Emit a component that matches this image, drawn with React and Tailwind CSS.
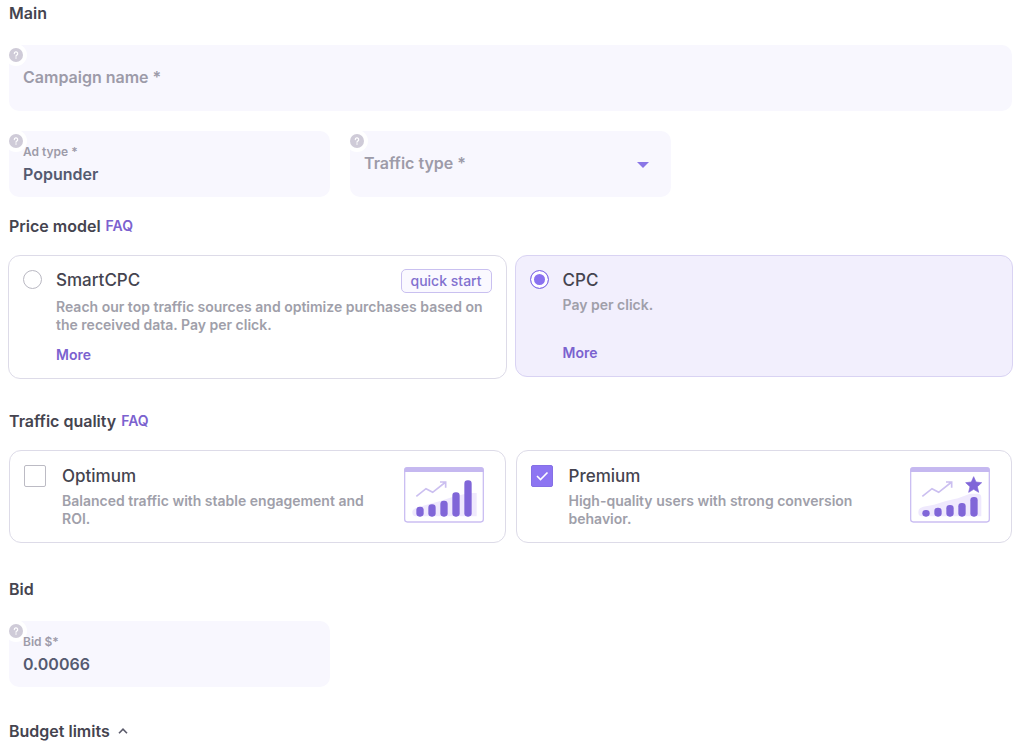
import React, { useState } from 'react';

const HelpIcon = () => (
  <button
    type="button"
    aria-label="Help"
    className="absolute -left-1 -top-px z-10 flex size-[22px] items-center justify-center rounded-full bg-white"
  >
    <svg viewBox="0 0 14 14" className="size-[14px]" fill="none">
      <circle cx="7" cy="7" r="7" fill="#cfcbd8" />
      <path d="M5.3 5.6a1.7 1.7 0 1 1 2.5 1.5c-.5.3-.8.5-.8 1.1" stroke="#fff" strokeWidth="1.2" strokeLinecap="round" />
      <circle cx="7" cy="10.1" r=".75" fill="#fff" />
    </svg>
  </button>
);

const SectionTitle = ({ children, faq }) => (
  <h2 className="flex items-center gap-[5px] text-[16px] leading-6 font-semibold text-[#45444f]">
    {children}
    {faq && <a href="#faq" className="text-[14px] text-[#7b62cf]">FAQ</a>}
  </h2>
);

const FilledField = ({ id, label, ...props }) => (
  <div className="relative flex h-[66px] flex-col rounded-[10px] bg-[#f8f7fe] px-[14px] pt-3">
    <HelpIcon />
    <label htmlFor={id} className="relative z-10 text-[12px] leading-[18px] font-semibold text-[#9d9ba9]">{label}</label>
    <input id={id} className="h-[26px] w-full bg-transparent text-[16px] font-semibold text-[#555a70] outline-none" {...props} />
  </div>
);

const PriceCard = ({ id, title, text, badge, checked, onChange }) => (
  <div className={`flex gap-[14px] rounded-xl border p-[14px] pt-[13px] ${checked ? 'border-[#d9d3f3] bg-[#f2effd]' : 'border-[#dddbe8] bg-white'}`}>
    <input
      id={id}
      type="radio"
      name="price"
      checked={checked}
      onChange={onChange}
      className="mt-px size-[19px] shrink-0 appearance-none rounded-full border border-[#b9b8c2] bg-white checked:border-[#8570e6] checked:bg-[#8a72f0] checked:shadow-[inset_0_0_0_3px_white]"
    />
    <div className="flex-1">
      <div className="flex items-start justify-between">
        <label htmlFor={id} className="text-[17px] leading-[22px] font-medium text-[#45444f]">{title}</label>
        {badge && (
          <span className="rounded-[5px] border border-[#c9c0f0] bg-[#faf9ff] px-[9px] text-[14px] leading-[22px] font-medium text-[#8271cf]">{badge}</span>
        )}
      </div>
      <p className="mt-[5px] min-h-9 text-[14px] leading-[18px] font-semibold text-[#a09faa]">{text}</p>
      <a href="#more" className="mt-3 block text-[14px] leading-[18px] font-semibold text-[#7b62cf]">More</a>
    </div>
  </div>
);

const TrafficArt = ({ tops, star }) => (
  <svg viewBox="0 0 240 168" className="h-14 w-20 shrink-0" fill="none">
    <rect x="2" y="2" width="236" height="163" rx="8" fill="#fff" stroke="#cbbff2" strokeWidth="4" />
    <path d="M1 15V10Q1 1 10 1H230Q239 1 239 10V15Z" fill="#c5b8f0" />
    <path
      d={star ? 'M25 135Q25 122 40 119L72 113L108 102L144 94L180 80H202Q214 80 214 92V148H35Q25 148 25 135Z' : 'M25 135Q25 125 45 120L73 112L109 102L145 90L195 78H218V148H35Q25 148 25 135Z'}
      fill="#efe9fd"
    />
    {tops.map((top, i) => (
      <rect key={i} x={37 + i * 36} y={top} width="22" height={149 - top} rx="10" fill="#8066d8" />
    ))}
    <path d="M37 88L66 65L86 76L125 45M108 45H125V62" stroke="#cbbff0" strokeWidth="5" />
    {star && (
      <path d="M191 29L198 45L215 47L202 59L206 76L191 67L176 76L180 59L167 47L184 45Z" fill="#8066d8" stroke="#8066d8" strokeWidth="2" strokeLinejoin="round" />
    )}
  </svg>
);

const QualityCard = ({ id, title, text, tops, star, checked, onChange }) => (
  <div className="flex items-start gap-4 rounded-xl border border-[#dddbe8] bg-white p-[14px]">
    <div className="relative size-[22px] shrink-0">
      <input
        id={id}
        type="checkbox"
        checked={checked}
        onChange={onChange}
        className="block size-[22px] appearance-none rounded-[2px] border border-[#bcbbc4] bg-white checked:border-[#8570e6] checked:bg-[#8d75f2]"
      />
      {checked && (
        <svg viewBox="0 0 22 22" className="pointer-events-none absolute inset-0" fill="none">
          <path d="M6 11L9.5 14.5L16.5 7.5" stroke="#fff" strokeWidth="1.6" />
        </svg>
      )}
    </div>
    <div className="flex-1">
      <label htmlFor={id} className="block text-[17px] leading-[22px] font-medium text-[#45444f]">{title}</label>
      <p className="mt-[5px] text-[14px] leading-[18px] font-semibold text-[#a09faa]">{text}</p>
    </div>
    <div className="mt-[2px] mr-[7px] ml-3">
      <TrafficArt tops={tops} star={star} />
    </div>
  </div>
);

const App = () => {
  const [price, setPrice] = useState('cpc');
  const [optimum, setOptimum] = useState(false);
  const [premium, setPremium] = useState(true);

  return (
    <form className="bg-white pt-px pr-3 pb-px pl-[9px] font-['Inter',sans-serif]">
      <SectionTitle>Main</SectionTitle>
      <div className="mt-5 grid grid-cols-3 gap-5">
        <div className="relative col-span-3">
          <HelpIcon />
          <input
            aria-label="Campaign name"
            placeholder="Campaign name *"
            className="block h-[66px] w-full rounded-[10px] bg-[#f8f7fe] px-[14px] pb-[2px] text-[16px] font-semibold text-[#555a70] outline-none placeholder:text-[#9d9ba9]"
          />
        </div>
        <FilledField id="adtype" label="Ad type *" defaultValue="Popunder" />
        <div className="relative">
          <HelpIcon />
          <select
            aria-label="Traffic type"
            defaultValue=""
            className="block h-[66px] w-full appearance-none rounded-[10px] bg-[#f8f7fe] px-[14px] pb-[2px] text-[16px] font-semibold text-[#9d9ba9] outline-none"
          >
            <option value="">Traffic type *</option>
            <option value="main">Mainstream</option>
          </select>
          <svg viewBox="0 0 12 6" className="pointer-events-none absolute top-[31px] right-[22px] h-[6px] w-3">
            <path d="M0 0H12L6 6Z" fill="#8a76e6" />
          </svg>
        </div>
      </div>

      <div className="mt-[17px]">
        <SectionTitle faq>Price model</SectionTitle>
      </div>
      <div className="-mx-px mt-[17px] grid grid-cols-2 items-start gap-2">
        <PriceCard
          id="smartcpc"
          title="SmartCPC"
          badge="quick start"
          text="Reach our top traffic sources and optimize purchases based on the received data. Pay per click."
          checked={price === 'smart'}
          onChange={() => setPrice('smart')}
        />
        <PriceCard id="cpc" title="CPC" text="Pay per click." checked={price === 'cpc'} onChange={() => setPrice('cpc')} />
      </div>

      <div className="mt-[30px]">
        <SectionTitle faq>Traffic quality</SectionTitle>
      </div>
      <div className="mt-[17px] grid grid-cols-2 gap-[10px]">
        <QualityCard
          id="optimum"
          title="Optimum"
          text="Balanced traffic with stable engagement and ROI."
          tops={[119, 112, 101, 76, 40]}
          checked={optimum}
          onChange={() => setOptimum(!optimum)}
        />
        <QualityCard
          id="premium"
          title="Premium"
          text="High-quality users with strong conversion behavior."
          tops={[129, 122, 114, 108, 90]}
          star
          checked={premium}
          onChange={() => setPremium(!premium)}
        />
      </div>

      <div className="mt-[34px]">
        <SectionTitle>Bid</SectionTitle>
      </div>
      <div className="mt-5 grid grid-cols-3 gap-5">
        <FilledField id="bid" label="Bid $*" defaultValue="0.00066" />
      </div>

      <div className="mt-8">
        <SectionTitle>
          <button type="button" className="flex items-center gap-2">
            Budget limits
            <svg viewBox="0 0 10 6" className="h-[6px] w-[10px]" fill="none">
              <path d="M1 5.2L5 1.2L9 5.2" stroke="#5b5b6b" strokeWidth="1.6" />
            </svg>
          </button>
        </SectionTitle>
      </div>
    </form>
  );
};

export default App;
